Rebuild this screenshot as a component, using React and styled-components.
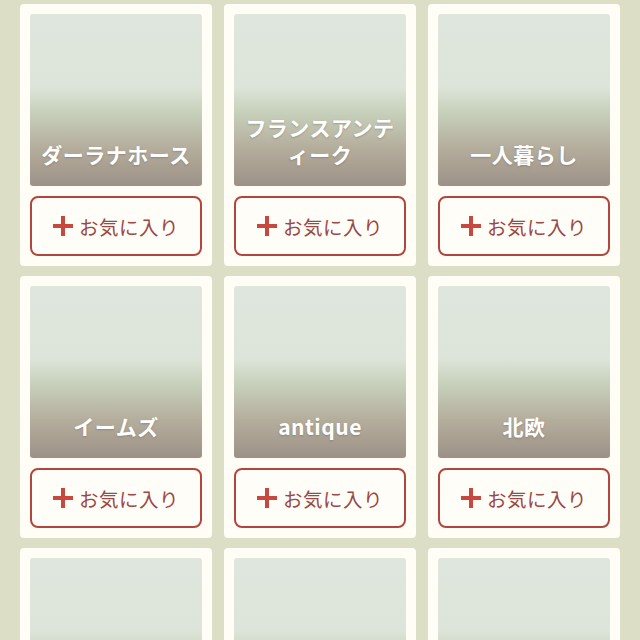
import React from "react";
import styled, { createGlobalStyle } from "styled-components";

const items = [
    "ダーラナホース",
    "フランスアンティーク",
    "一人暮らし",
    "イームズ",
    "antique",
    "北欧",
    "",
    "",
    "",
];

const App = () => {
    return (
        <>
            <Global />
            <Grid>
                {items.map((name, i) => (
                    <Card key={i}>
                        <Thumb>
                            <Label>{name}</Label>
                        </Thumb>
                        <FavButton>
                            <Plus />
                            お気に入り
                        </FavButton>
                    </Card>
                ))}
            </Grid>
        </>
    );
};

const Global = createGlobalStyle`
    html, body {
        margin: 0;
        background: #dcdfc6;
        height: 640px;
        overflow: hidden;
    }
    body {
        font-family: "Noto Sans CJK JP", "Noto Sans", sans-serif;
    }
`;

const Grid = styled.div`
    display: grid;
    grid-template-columns: repeat(3, 192px);
    column-gap: 12px;
    row-gap: 10px;
    padding: 4px 20px 0;
`;

const Card = styled.div`
    background: #fffdf6;
    border-radius: 4px;
    padding: 10px;
    display: flex;
    flex-direction: column;
    gap: 10px;
    height: 242px;
`;

const Thumb = styled.div`
    height: 172px;
    border-radius: 3px;
    background: linear-gradient(
        to bottom,
        #dfe6dd 0%,
        #dde5da 42%,
        #c6cfba 58%,
        #b4ad9c 78%,
        #9d9187 100%
    );
    display: flex;
    align-items: flex-end;
    justify-content: center;
    padding: 0 8px 18px;
    box-sizing: border-box;
`;

const Label = styled.div`
    color: #ffffff;
    font-size: 21px;
    font-weight: 600;
    line-height: 27px;
    text-align: center;
    letter-spacing: 0.5px;
    text-shadow: 0 1px 2px rgba(80, 70, 60, 0.3);
`;

const FavButton = styled.div`
    height: 60px;
    box-sizing: border-box;
    border: 2px solid #b2463d;
    border-radius: 8px;
    display: flex;
    align-items: center;
    justify-content: center;
    gap: 6px;
    color: #9a4843;
    font-size: 19.5px;
    letter-spacing: 0.5px;
    background: #fffdf7;
`;

const Plus = styled.span`
    position: relative;
    width: 20px;
    height: 20px;
    &::before,
    &::after {
        content: "";
        position: absolute;
        background: #c9483e;
    }
    &::before {
        left: 0;
        right: 0;
        top: 8px;
        height: 4px;
    }
    &::after {
        top: 0;
        bottom: 0;
        left: 8px;
        width: 4px;
    }
`;

export default App;
